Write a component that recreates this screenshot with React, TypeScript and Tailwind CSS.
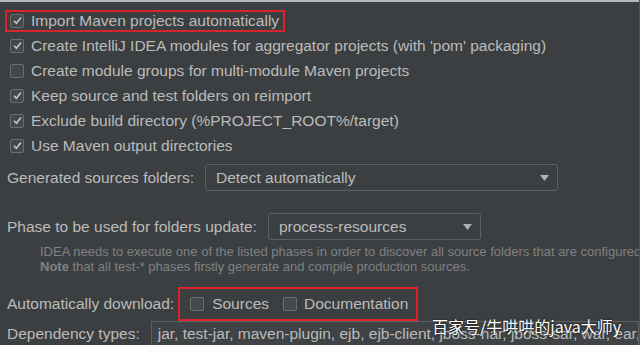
const font = { fontFamily: '"Liberation Sans", Arial, sans-serif' };

function Box({ checked }: { checked?: boolean }) {
  return (
    <span className="w-[14px] h-[14px] shrink-0 border border-[#6b6e70] bg-[#43494a] rounded-[2px] flex items-center justify-center">
      {checked && (
        <svg width="11" height="11" viewBox="0 0 11 11">
          <path d="M2 5.8 L4.4 8.2 L9 2.6" fill="none" stroke="#c8c8c8" strokeWidth="1.6" />
        </svg>
      )}
    </span>
  );
}

function CheckRow({ label, checked }: { label: string; checked?: boolean }) {
  return (
    <div className="h-[25px] flex items-center gap-[7px] pl-[10px]">
      <Box checked={checked} />
      <span>{label}</span>
    </div>
  );
}

function Combo({ value, width }: { value: string; width: string }) {
  return (
    <div className={`h-[27px] ${width} border border-[#5e6162] rounded-[3px] flex items-center justify-between pl-[10px] pr-[8px]`}>
      <span>{value}</span>
      <svg width="9" height="6" viewBox="0 0 9 6">
        <path d="M0 0 L9 0 L4.5 6 Z" fill="#b0b0b0" />
      </svg>
    </div>
  );
}

export default function App() {
  return (
    <div
      className="relative w-[640px] h-[345px] overflow-hidden bg-[#3c3f41] text-[#bbbbbb] text-[15.5px] border-r border-[#4c5052]"
      style={font}
    >
      <div className="h-[2px] bg-[#b4b7b9]" />
      <div className="pt-[6px]">
        <div className="h-[25px] flex items-center pl-[5px]">
          <div className="h-[22px] flex items-center gap-[7px] border-2 border-[#d9232a] pl-[3px] pr-[4px]">
            <Box checked />
            <span>Import Maven projects automatically</span>
          </div>
        </div>
        <CheckRow checked label="Create IntelliJ IDEA modules for aggregator projects (with 'pom' packaging)" />
        <CheckRow label="Create module groups for multi-module Maven projects" />
        <CheckRow checked label="Keep source and test folders on reimport" />
        <CheckRow checked label="Exclude build directory (%PROJECT_ROOT%/target)" />
        <CheckRow checked label="Use Maven output directories" />

        <div className="mt-[6px] flex items-center pl-[7px] gap-[11px]">
          <span>Generated sources folders:</span>
          <Combo value="Detect automatically" width="w-[353px]" />
        </div>

        <div className="mt-[22px] flex items-center pl-[7px] gap-[11px]">
          <span>Phase to be used for folders update:</span>
          <Combo value="process-resources" width="w-[213px]" />
        </div>

        <div className="mt-[4px] pl-[40px] text-[13px] leading-[15px] text-[#7f8183] whitespace-nowrap">
          <div>IDEA needs to execute one of the listed phases in order to discover all source folders that are configured</div>
          <div>
            <b className="font-bold">Note</b> that all test-* phases firstly generate and compile production sources.
          </div>
        </div>

        <div className="mt-[13px] flex items-center pl-[7px] gap-[4px]">
          <span>Automatically download:</span>
          <div className="h-[34px] w-[240px] flex items-center border-2 border-[#d9232a] pl-[10px]">
            <Box />
            <span className="ml-[8px]">Sources</span>
            <span className="ml-[14px]"><Box /></span>
            <span className="ml-[7px]">Documentation</span>
          </div>
        </div>

        <div className="flex items-center pl-[7px] gap-[11px]">
          <span>Dependency types:</span>
          <div className="h-[26px] flex-1 border border-[#5e6162] bg-[#404345] pl-[6px] flex items-center whitespace-nowrap overflow-hidden">
            jar, test-jar, maven-plugin, ejb, ejb-client, jboss-har, jboss-sar, war, ear, bundle
          </div>
        </div>
      </div>

      <div
        className="absolute left-[432px] top-[316px] text-[16px] leading-[20px] text-white whitespace-nowrap"
        style={{ fontFamily: '"Noto Sans CJK SC", "Liberation Sans", sans-serif', textShadow: '0 0 2px #000' }}
      >
        百家号/牛哄哄的java大师y
      </div>
    </div>
  );
}
